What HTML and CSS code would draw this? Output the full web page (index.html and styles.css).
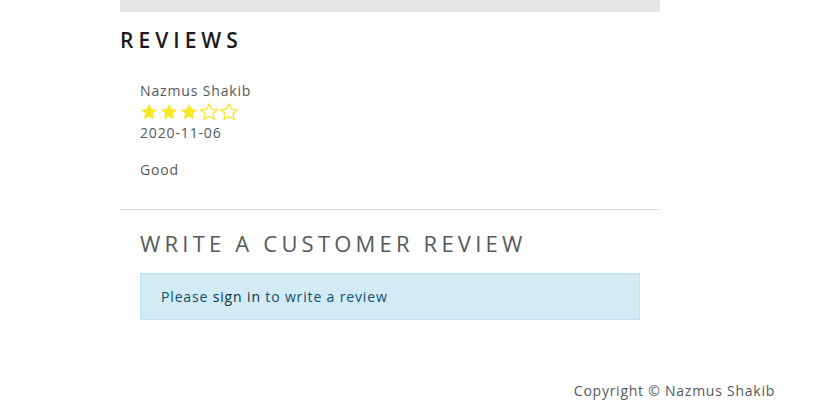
FILE: index.html
```html
<!DOCTYPE html>
<html>
<head>
<meta charset="utf-8">
<link rel="stylesheet" href="styles.css">
</head>
<body>
<div class="page">
  <div class="main">
    <div class="image-strip"></div>
    <h2 class="reviews-title">Reviews</h2>
    <div class="list">
      <div class="item review">
        <div class="name">Nazmus Shakib</div>
        <div class="stars">
          <svg width="100" height="18" viewBox="0 0 100 18">
            <defs>
              <path id="st" d="M9 0.8l2.4 5.3 5.8.6-4.4 3.9 1.3 5.7L9 13.4l-5.1 2.9 1.3-5.7L0.8 6.7l5.8-.6z"/>
            </defs>
            <use href="#st" x="0" fill="#f8e825"/>
            <use href="#st" x="20" fill="#f8e825"/>
            <use href="#st" x="40" fill="#f8e825"/>
            <use href="#st" x="60" fill="none" stroke="#f8e825" stroke-width="1.3"/>
            <use href="#st" x="80" fill="none" stroke="#f8e825" stroke-width="1.3"/>
          </svg>
        </div>
        <div class="date">2020-11-06</div>
        <p class="comment">Good</p>
      </div>
      <div class="item write">
        <h2 class="write-title">Write a customer review</h2>
        <div class="alert">Please <a class="alert-link" href="#">sign in</a> to write a review</div>
      </div>
    </div>
  </div>
  <footer class="footer">Copyright © Nazmus Shakib</footer>
</div>
</body>
</html>
```

FILE: styles.css
```css
* { box-sizing: border-box; }
html, body { margin: 0; padding: 0; background: #fff; }
body {
  font-family: "Open Sans", "Noto Sans", sans-serif;
  font-size: 14px;
  color: #55595c;
  letter-spacing: 0.85px;
}
.page {
  width: 824px;
  height: 417px;
  position: relative;
}
.main {
  margin-left: 120px;
  width: 540px;
}
.image-strip {
  height: 12px;
  background: #e7e6e4;
}
.reviews-title {
  margin: 16px 0 0;
  font-size: 21px;
  font-weight: 600;
  line-height: 24px;
  letter-spacing: 5px;
  text-transform: uppercase;
  color: #1a1a1a;
}
.list { margin-top: 16px; }
.item { padding: 12px 20px; }
.review { border-bottom: 1px solid #dedede; padding-bottom: 13px; }
.name, .date { line-height: 21px; }
.stars { height: 21px; display: flex; align-items: center; }
.stars svg { display: block; }
.comment { margin: 16px 0 16px; line-height: 21px; }
.write { padding-top: 19px; }
.write-title {
  margin: 0 0 15px;
  font-size: 22px;
  font-weight: 400;
  line-height: 29px;
  letter-spacing: 4.2px;
  text-transform: uppercase;
  color: #55595c;
}
.alert {
  width: 500px;
  background: #d2ebf5;
  border: 1px solid #bfe2f0;
  color: #105069;
  padding: 12px 20px;
  line-height: 21px;
}
.alert-link { color: #0a3242; text-decoration: none; }
.footer {
  position: absolute;
  right: 49px;
  top: 380px;
  line-height: 21px;
  letter-spacing: 0.75px;
}
```
